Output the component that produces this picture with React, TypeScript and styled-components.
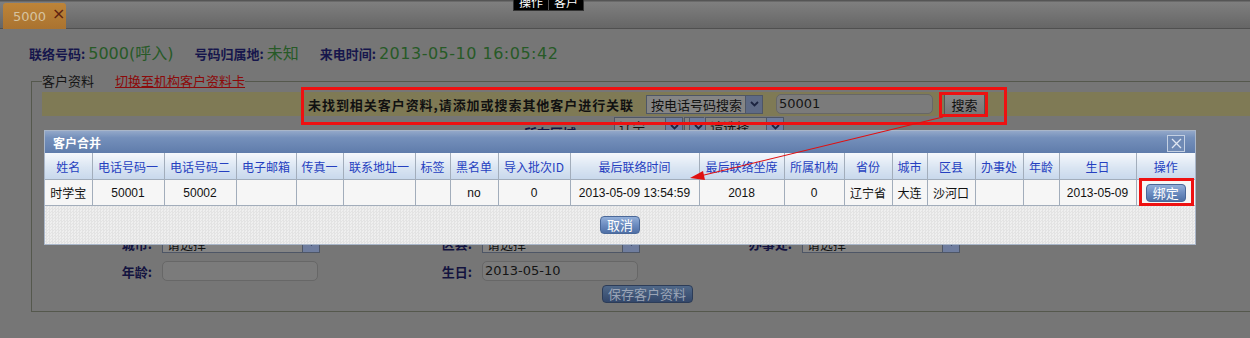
import React from 'react';
import styled, { createGlobalStyle } from 'styled-components';

const cjk = `"Noto Sans CJK SC", "Liberation Sans", sans-serif`;

const GlobalStyle = createGlobalStyle`
  html, body {
    margin: 0;
    padding: 0;
    background: #767676;
    overflow: hidden;
  }
  body {
    font-family: "Liberation Sans", "Noto Sans CJK SC", sans-serif;
    font-size: 12px;
  }
`;

interface Field {
  label: string;
  kind: 'input' | 'select';
  value?: string;
}

const formRows: Field[][] = [
  [
    { label: '电话号码:', kind: 'input', value: '50001' },
    { label: '手机:', kind: 'input' },
    { label: '传真:', kind: 'input' },
  ],
  [
    { label: '电子邮箱:', kind: 'input' },
    { label: '联系地址:', kind: 'input' },
    { label: '标签:', kind: 'input' },
  ],
  [
    { label: '所属机构:', kind: 'select', value: '请选择' },
    { label: '省份:', kind: 'select', value: '请选择' },
    { label: '黑名单:', kind: 'select', value: '否' },
  ],
  [
    { label: '城市:', kind: 'select', value: '请选择' },
    { label: '区县:', kind: 'select', value: '请选择' },
    { label: '办事处:', kind: 'select', value: '请选择' },
  ],
  [
    { label: '年龄:', kind: 'input' },
    { label: '生日:', kind: 'input', value: '2013-05-10' },
  ],
];

const columns = [
  { title: '姓名', w: 47 },
  { title: '电话号码一', w: 72 },
  { title: '电话号码二', w: 72 },
  { title: '电子邮箱', w: 60 },
  { title: '传真一', w: 47 },
  { title: '联系地址一', w: 72 },
  { title: '标签', w: 35 },
  { title: '黑名单', w: 48 },
  { title: '导入批次ID', w: 72 },
  { title: '最后联络时间', w: 129 },
  { title: '最后联络坐席', w: 85 },
  { title: '所属机构', w: 60 },
  { title: '省份', w: 48 },
  { title: '城市', w: 35 },
  { title: '区县', w: 48 },
  { title: '办事处', w: 48 },
  { title: '年龄', w: 36 },
  { title: '生日', w: 77 },
  { title: '操作', w: 59 },
];

const record = [
  '时学宝', '50001', '50002', '', '', '', '', 'no', '0',
  '2013-05-09 13:54:59', '2018', '0', '辽宁省', '大连', '沙河口', '', '', '2013-05-09',
];

const App = () => {
  return (
    <>
      <GlobalStyle />
      <Page>
        <TabBar>
          <Tab>
            <TabText>5000</TabText>
            <TabClose>×</TabClose>
          </Tab>
        </TabBar>
        <Tip>
          <TipCell>操作</TipCell>
          <TipCell>客户</TipCell>
        </Tip>

        <InfoRow>
          <InfoLabel>联络号码:</InfoLabel>
          <InfoValue>5000(呼入)</InfoValue>
          <InfoLabel>号码归属地:</InfoLabel>
          <InfoValue>未知</InfoValue>
          <InfoLabel>来电时间:</InfoLabel>
          <InfoValue $wide>2013-05-10 16:05:42</InfoValue>
        </InfoRow>

        <Card>
          <Legend>
            <span>客户资料</span>
            <SwitchLink>切换至机构客户资料卡</SwitchLink>
          </Legend>
          <Notice>
            <NoticeText>未找到相关客户资料,请添加或搜索其他客户进行关联</NoticeText>
            <Select $width={117}>
              <span>按电话号码搜索</span>
              <SelectArrow $dark>
                <Chevron />
              </SelectArrow>
            </Select>
            <TextInput $width={157}>50001</TextInput>
            <PlainButton>搜索</PlainButton>
          </Notice>

          <Form>
            <TopRow>
              <FieldLabel $free>所在区域:</FieldLabel>
              <Select $width={69}>
                <span>辽宁</span>
                <SelectArrow>
                  <Chevron />
                </SelectArrow>
              </Select>
              <Select $width={20}>
                <span />
                <SelectArrow>
                  <Chevron />
                </SelectArrow>
              </Select>
              <Select $width={79}>
                <span>请选择</span>
                <SelectArrow>
                  <Chevron />
                </SelectArrow>
              </Select>
            </TopRow>
            {formRows.map((row, i) => (
              <FormRow key={i}>
                {row.map((f) => (
                  <FieldGroup key={f.label}>
                    <FieldLabel>{f.label}</FieldLabel>
                    {f.kind === 'select' ? (
                      <Select $width={158}>
                        <span>{f.value}</span>
                        <SelectArrow>
                          <Chevron />
                        </SelectArrow>
                      </Select>
                    ) : (
                      <TextInput $width={156}>{f.value}</TextInput>
                    )}
                  </FieldGroup>
                ))}
              </FormRow>
            ))}
            <SaveRow>
              <SaveButton>保存客户资料</SaveButton>
            </SaveRow>
          </Form>
        </Card>

        <Dialog>
          <DialogHead>
            <DialogTitle>客户合并</DialogTitle>
            <CloseBox>
              <svg width="11" height="11" viewBox="0 0 11 11">
                <path d="M1 1 L10 10 M10 1 L1 10" stroke="#dfe6f1" strokeWidth="1.3" fill="none" />
              </svg>
            </CloseBox>
          </DialogHead>
          <Grid>
            <colgroup>
              {columns.map((c) => (
                <col key={c.title} style={{ width: c.w }} />
              ))}
            </colgroup>
            <thead>
              <tr>
                {columns.map((c) => (
                  <HeadCell key={c.title}>{c.title}</HeadCell>
                ))}
              </tr>
            </thead>
            <tbody>
              <tr>
                {record.map((v, i) => (
                  <Cell key={i} $cjk={/[\u4e00-\u9fa5]/.test(v)}>
                    {v}
                  </Cell>
                ))}
                <Cell>
                  <BlueButton>绑定</BlueButton>
                </Cell>
              </tr>
            </tbody>
          </Grid>
          <DialogFoot>
            <BlueButton>取消</BlueButton>
          </DialogFoot>
        </Dialog>

        {/* screenshot annotations */}
        <Mark $x={301} $y={87} $w={706} $h={38} />
        <Mark $x={939} $y={92} $w={49} $h={25} />
        <Mark $x={1139} $y={178} $w={55} $h={28} />
        <Arrow width="1250" height="338" viewBox="0 0 1250 338">
          <line x1="943" y1="117" x2="700" y2="176" stroke="#e01010" strokeWidth="1.1" />
          <polygon points="690,178 703,171 705,180" fill="#e01010" />
        </Arrow>
      </Page>
    </>
  );
};

export default App;

const Page = styled.div`
  position: relative;
  width: 1250px;
  height: 338px;
  overflow: hidden;
  background: #767676;
`;

const TabBar = styled.div`
  display: flex;
  height: 29px;
  padding: 3px 0 0 3px;
  box-sizing: border-box;
  background: linear-gradient(#555 0, #555 1px, #7f7f7f 2px, #666 100%);
  border-bottom: 1px solid #505050;
`;

const Tab = styled.div`
  display: flex;
  align-items: center;
  gap: 6px;
  width: 63px;
  height: 26px;
  padding-left: 10px;
  box-sizing: border-box;
  background: linear-gradient(#bd8438, #aa7330);
  border-radius: 3px 3px 0 0;
`;

const TabText = styled.span`
  font-family: "DejaVu Sans", sans-serif;
  font-size: 13px;
  color: #d6c39f;
`;

const TabClose = styled.span`
  font-family: "DejaVu Sans", sans-serif;
  font-size: 16px;
  line-height: 14px;
  color: #5e2210;
  margin-top: -4px;
`;

const Tip = styled.div`
  position: absolute;
  left: 513px;
  top: -8px;
  display: flex;
  background: #000;
  border: 1px solid #333;
`;

const TipCell = styled.span`
  font-family: ${cjk};
  font-size: 12px;
  line-height: 17px;
  color: #fff;
  padding: 0 5px;
  & + & {
    border-left: 1px solid #555;
  }
`;

const InfoRow = styled.div`
  display: flex;
  align-items: baseline;
  height: 20px;
  line-height: 20px;
  margin: 15px 0 0 29px;
`;

const InfoLabel = styled.span`
  font-family: ${cjk};
  font-size: 13px;
  font-weight: bold;
  color: #16164c;
  margin-right: 3px;
`;

const InfoValue = styled.span<{ $wide?: boolean }>`
  font-family: "DejaVu Sans", "Noto Sans CJK SC", sans-serif;
  font-size: 16px;
  letter-spacing: ${(p) => (p.$wide ? '0.5px' : '0')};
  color: #275a27;
  margin-right: 21px;
`;

const Card = styled.fieldset`
  margin: 8px 0 0 31px;
  width: 1231px;
  min-width: 0;
  box-sizing: border-box;
  padding: 2px 10px 8px 10px;
  border: 1px solid #55584d;
`;

const Legend = styled.legend`
  padding: 0;
  height: 18px;
  line-height: 18px;
  font-family: ${cjk};
  font-size: 13px;
  color: #151515;
`;

const SwitchLink = styled.a`
  margin-left: 21px;
  color: #8c0a0a;
  text-decoration: underline;
`;

const Notice = styled.div`
  display: flex;
  align-items: center;
  justify-content: center;
  height: 24px;
  background: #7f7a55;
`;

const NoticeText = styled.span`
  font-family: ${cjk};
  font-size: 13px;
  font-weight: bold;
  letter-spacing: 0.95px;
  color: #111;
  margin-right: 12px;
`;

const Select = styled.div<{ $width: number }>`
  display: flex;
  align-items: center;
  justify-content: space-between;
  width: ${(p) => p.$width}px;
  height: 19px;
  box-sizing: border-box;
  border: 1px solid #4e5666;
  background: #858585;
  padding-left: 4px;
  font-family: ${cjk};
  font-size: 13px;
  color: #111;
  line-height: 17px;
`;

const SelectArrow = styled.span<{ $dark?: boolean }>`
  display: flex;
  align-items: center;
  justify-content: center;
  width: 16px;
  height: 17px;
  flex-shrink: 0;
  background: ${(p) => (p.$dark ? '#5e6a85' : '#6f7d9e')};
  border-left: 1px solid #4e5666;
`;

const Chevron = () => (
  <svg width="9" height="6" viewBox="0 0 9 6">
    <path d="M1 1 L4.5 4.5 L8 1" stroke="#1c2440" strokeWidth="1.8" fill="none" />
  </svg>
);

const TextInput = styled.div<{ $width: number }>`
  width: ${(p) => p.$width}px;
  height: 20px;
  box-sizing: border-box;
  margin-left: 13px;
  padding-left: 2px;
  border: 1px solid #676767;
  border-radius: 5px;
  background: #7b7b7b;
  font-family: "DejaVu Sans", sans-serif;
  font-size: 13px;
  line-height: 18px;
  color: #151515;
`;

const PlainButton = styled.button`
  margin-left: 11px;
  height: 21px;
  width: 41px;
  padding: 0;
  border: 1px solid #555;
  background: linear-gradient(#8a8a8a, #777);
  font-family: ${cjk};
  font-size: 13px;
  color: #111;
`;

const Form = styled.div`
  display: flex;
  flex-direction: column;
  gap: 8px;
  margin-top: 1px;
  padding-left: 30px;
`;

const TopRow = styled.div`
  display: flex;
  align-items: flex-start;
  height: 20px;
  margin-bottom: 4px;
  padding-left: 452px;
  ${'' /* selects of the cascading area picker */}
  & > div {
    margin-left: 1px;
  }
  & > div:first-of-type {
    margin-left: 34px;
  }
`;

const FormRow = styled.div`
  display: flex;
  height: 20px;
  align-items: center;
`;

const FieldGroup = styled.div`
  display: flex;
  align-items: center;
  width: 320px;
  ${TextInput} {
    margin-left: 10px;
  }
  ${Select} {
    margin-left: 10px;
  }
`;

const FieldLabel = styled.span<{ $free?: boolean }>`
  width: ${(p) => (p.$free ? 'auto' : '80px')};
  margin-top: ${(p) => (p.$free ? '6px' : '0')};
  text-align: right;
  font-family: ${cjk};
  font-size: 13px;
  font-weight: bold;
  color: #13133f;
`;

const SaveRow = styled.div`
  display: flex;
  justify-content: center;
  margin-top: -4px;
  padding-right: 29px;
`;

const SaveButton = styled.button`
  width: 91px;
  height: 18px;
  padding: 0;
  border: 1px solid #2c3c58;
  border-radius: 4px;
  background: linear-gradient(#506888, #33476a);
  font-family: ${cjk};
  font-size: 13px;
  line-height: 16px;
  color: #9aa4b6;
`;

const Dialog = styled.div`
  position: absolute;
  left: 44px;
  top: 130px;
  width: 1152px;
  height: 115px;
  box-sizing: border-box;
  border: 1px solid #a9b6c9;
  background: repeating-conic-gradient(#e3e3e3 0 25%, #efefef 0 50%) 0 0 / 3px 3px;
  display: flex;
  flex-direction: column;
`;

const DialogHead = styled.div`
  display: flex;
  align-items: center;
  justify-content: space-between;
  height: 22px;
  padding: 0 10px 0 8px;
  background: linear-gradient(#93a8c9 0, #7590bb 30%, #5f7cab 100%);
`;

const DialogTitle = styled.span`
  font-family: ${cjk};
  font-size: 12px;
  font-weight: bold;
  color: #fff;
`;

const CloseBox = styled.span`
  display: flex;
  align-items: center;
  justify-content: center;
  width: 16px;
  height: 15px;
  margin-top: 3px;
  border: 1px solid #c4d0e2;
  background: #6f8ab5;
`;

const Grid = styled.table`
  border-collapse: collapse;
  table-layout: fixed;
  width: 1150px;
`;

const HeadCell = styled.th`
  height: 26px;
  padding: 0;
  border: 1px solid #a2adbb;
  border-top: none;
  background: linear-gradient(#f5f8fc, #dae5f2 55%, #c8d8ec);
  font-family: ${cjk};
  font-size: 12px;
  font-weight: normal;
  color: #2540c0;
  white-space: nowrap;
  &:first-child {
    border-left: none;
  }
  &:last-child {
    border-right: none;
  }
`;

const Cell = styled.td<{ $cjk?: boolean }>`
  height: 25px;
  padding: 0;
  border: 1px solid #a2adbb;
  background: #f6f6f6;
  text-align: center;
  font-family: ${(p) => (p.$cjk ? cjk : '"Liberation Sans", sans-serif')};
  font-size: 12px;
  color: #111;
  white-space: nowrap;
  &:first-child {
    border-left: none;
  }
  &:last-child {
    border-right: none;
  }
`;

const BlueButton = styled.button`
  width: 40px;
  height: 18px;
  padding: 0;
  border: 1px solid #4a6899;
  border-radius: 4px;
  background: linear-gradient(#93afd9, #6c8cc0 50%, #4f70a6);
  font-family: ${cjk};
  font-size: 13px;
  line-height: 16px;
  color: #fff;
`;

const DialogFoot = styled.div`
  display: flex;
  justify-content: center;
  padding-top: 10px;
`;

const Mark = styled.div<{ $x: number; $y: number; $w: number; $h: number }>`
  position: absolute;
  left: ${(p) => p.$x}px;
  top: ${(p) => p.$y}px;
  width: ${(p) => p.$w}px;
  height: ${(p) => p.$h}px;
  box-sizing: border-box;
  border: 3px solid #ee1111;
`;

const Arrow = styled.svg`
  position: absolute;
  left: 0;
  top: 0;
  pointer-events: none;
`;
